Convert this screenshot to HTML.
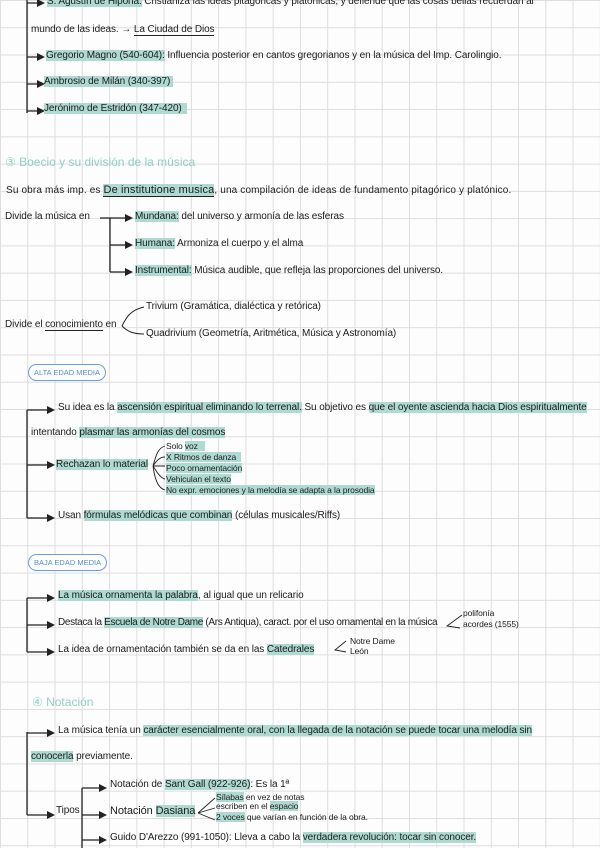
<!DOCTYPE html>
<html><head><meta charset="utf-8"><style>
html,body{margin:0;padding:0}
body{width:600px;height:848px;position:relative;overflow:hidden;background-color:#fdfdfd;
background-image:linear-gradient(to right,#dedede 1px,transparent 1px),linear-gradient(to bottom,#dedede 1px,transparent 1px);
background-size:27.27px 27.27px;background-position:0 0;font-family:"Liberation Sans",sans-serif;color:#1c1c1c}
.t{position:absolute;font-size:10px;line-height:12px;white-space:nowrap;letter-spacing:-0.1px}
.s{font-size:8.5px;line-height:10px}
.h{background:#aedad2}
.u{border-bottom:1px solid #222}
.hd{position:absolute;color:#8fd0c4;font-size:12px;white-space:nowrap}
.b{position:absolute;border:1.3px solid #6d9fe0;border-radius:10px;color:#5a8ed6;font-size:7.5px;padding:3px 5px;white-space:nowrap;background:#fdfdfd}
svg{position:absolute;left:0;top:0}
</style></head><body>
<svg width="600" height="848" stroke="#222" stroke-width="1.3" fill="#222">
<path d="M27 0V113M27 3H38M27 57H38M27 84H38M27 111H38" fill="none"/>
<path d="M37 -1L45 3L37 7ZM37 53L45 57L37 61ZM37 80L45 84L37 88ZM37 107L45 111L37 115Z" stroke="none"/>
<path d="M100 218H110M110 218V272M110 218H126M110 245H126M110 272H126" fill="none"/>
<path d="M125 214L133 218L125 222ZM125 241L133 245L125 249ZM125 268L133 272L125 276Z" stroke="none"/>
<path d="M122 326C126 318,130 310,144 307M122 326C128 332,134 334,144 334" fill="none" stroke-width="1"/>
<path d="M27 410V518M27 410H48M27 465H48M27 518H48" fill="none"/>
<path d="M47 406L55 410L47 414ZM47 461L55 465L47 469ZM47 514L55 518L47 522Z" stroke="none"/>
<path d="M153 466C156 455,158 448,165 446M153 466C157 460,160 457,165 457M153 466H165M153 466C157 472,160 478,165 479M153 466C155 480,158 488,165 490" fill="none" stroke-width="0.9"/>
<path d="M27 598V652M27 598H48M27 625H48M27 652H48" fill="none"/>
<path d="M47 594L55 598L47 602ZM47 621L55 625L47 629ZM47 648L55 652L47 656Z" stroke="none"/>
<path d="M462 615L447 626L460 628M346 641L335 650L346 652" fill="none" stroke-width="0.9"/>
<path d="M27 732V815M27 733H48M27 815H48M82 788V848M82 788H100M82 815H100M82 840H100" fill="none"/>
<path d="M47 729L55 733L47 737ZM47 811L55 815L47 819ZM99 784L107 788L99 792ZM99 811L107 815L99 819ZM99 836L107 840L99 844Z" stroke="none"/>
<path d="M198 813L215 798M198 813L215 808M198 813L215 820" fill="none" stroke-width="0.9"/>
</svg>

<div class="t" style="left:47px;top:-4px"><span class="h">S. Agustín de Hipona:</span> Cristianiza las ideas pitagóricas y platónicas, y defiende que las cosas bellas recuerdan al</div>
<div class="t" style="left:31px;top:24px">mundo de las ideas. → <span class="u">La Ciudad de Dios</span></div>
<div class="t" style="left:46px;top:50px"><span class="h">Gregorio Magno (540-604):</span> Influencia posterior en cantos gregorianos y en la música del Imp. Carolingio.</div>
<div class="t" style="left:44px;top:76px"><span class="h">Ambrosio de Milán (340-397)&nbsp;</span></div>
<div class="t" style="left:44px;top:103px"><span class="h">Jerónimo de Estridón (347-420)&nbsp;&nbsp;</span></div>

<div class="hd" style="left:5px;top:155px">③ Boecio y su división de la música</div>
<div class="t" style="left:6px;top:184px;letter-spacing:0.15px">Su obra más imp. es <span class="u h" style="font-size:11px">De institutione musica</span>, una compilación de ideas de fundamento pitagórico y platónico.</div>
<div class="t" style="left:5px;top:211px">Divide la música en</div>
<div class="t" style="left:135px;top:211px"><span class="h">Mundana:</span> del universo y armonía de las esferas</div>
<div class="t" style="left:135px;top:238px"><span class="h">Humana:</span> Armoniza el cuerpo y el alma</div>
<div class="t" style="left:135px;top:265px"><span class="h">Instrumental:</span> Música audible, que refleja las proporciones del universo.</div>
<div class="t" style="left:5px;top:319px">Divide el <span class="u">conocimiento</span> en</div>
<div class="t" style="left:146px;top:301px">Trivium (Gramática, dialéctica y retórica)</div>
<div class="t" style="left:146px;top:328px">Quadrivium (Geometría, Aritmética, Música y Astronomía)</div>

<div class="b" style="left:28px;top:364px">ALTA EDAD MEDIA</div>
<div class="t" style="left:58px;top:402px">Su idea es la <span class="h">ascensión espiritual eliminando lo terrenal.</span> Su objetivo es <span class="h">que el oyente ascienda hacia Dios espiritualmente</span></div>
<div class="t" style="left:31px;top:427px">intentando <span class="h">plasmar las armonías del cosmos</span></div>
<div class="t" style="left:56px;top:459px"><span class="h">Rechazan lo material</span></div>
<div class="t s" style="left:166px;top:441px">Solo <span class="h">voz&nbsp;&nbsp;&nbsp;</span></div>
<div class="t s" style="left:166px;top:452px"><span class="h">X Ritmos de danza&nbsp;&nbsp;</span></div>
<div class="t s" style="left:166px;top:463px"><span class="h">Poco ornamentación</span></div>
<div class="t s" style="left:166px;top:474px"><span class="h">Vehiculan el texto</span></div>
<div class="t s" style="left:166px;top:485px"><span class="h">No expr. emociones y la melodía se adapta a la prosodia</span></div>
<div class="t" style="left:58px;top:510px">Usan <span class="h">fórmulas melódicas que combinan</span> (células musicales/Riffs)</div>

<div class="b" style="left:28px;top:554px">BAJA EDAD MEDIA</div>
<div class="t" style="left:58px;top:590px"><span class="h">La música ornamenta la palabra</span>, al igual que un relicario</div>
<div class="t" style="left:58px;top:617px;letter-spacing:-0.35px">Destaca la <span class="h">Escuela de Notre Dame</span> (Ars Antiqua), caract. por el uso ornamental en la música</div>
<div class="t s" style="left:463px;top:608px">polifonía</div>
<div class="t s" style="left:463px;top:619px">acordes (1555)</div>
<div class="t" style="left:58px;top:644px">La idea de ornamentación también se da en las <span class="h">Catedrales</span></div>
<div class="t s" style="left:350px;top:636px">Notre Dame</div>
<div class="t s" style="left:350px;top:646px">León</div>

<div class="hd" style="left:32px;top:695px">④ Notación</div>
<div class="t" style="left:58px;top:725px">La música tenía un <span class="h">carácter esencialmente oral, con la llegada de la notación se puede tocar una melodía sin</span></div>
<div class="t" style="left:31px;top:751px"><span class="h">conocerla</span> previamente.</div>
<div class="t" style="left:110px;top:779px">Notación de <span class="h">Sant Gall (922-926)</span>: Es la 1ª</div>
<div class="t" style="left:56px;top:805px">Tipos</div>
<div class="t" style="left:110px;top:805px;font-size:11px">Notación <span class="h">Dasiana</span></div>
<div class="t s" style="left:216px;top:792px"><span class="h">Sílabas</span> en vez de notas</div>
<div class="t s" style="left:216px;top:801px">escriben en el <span class="h">espacio</span></div>
<div class="t s" style="left:216px;top:812px"><span class="h">2 voces</span> que varían en función de la obra.</div>
<div class="t" style="left:110px;top:832px">Guido D'Arezzo (991-1050): Lleva a cabo la <span class="h">verdadera revolución: tocar sin conocer.</span></div>
</body></html>
